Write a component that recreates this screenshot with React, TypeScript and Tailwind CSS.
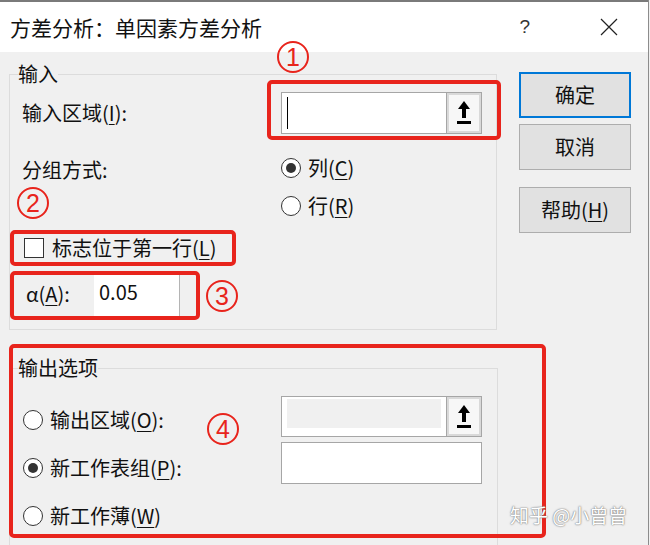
import type { ReactNode } from 'react'

const RED = 'border-[#e8241c]'

function Key({ children }: { children: ReactNode }) {
  return <span className="underline underline-offset-[3px] decoration-1">{children}</span>
}

function Radio({ checked }: { checked?: boolean }) {
  return (
    <span className="flex h-[20px] w-[20px] shrink-0 items-center justify-center rounded-full border border-[#333] bg-white">
      {checked && <span className="h-[10px] w-[10px] rounded-full bg-[#333]" />}
    </span>
  )
}

function PickButton() {
  return (
    <div className="flex h-full w-[36px] shrink-0 items-center justify-center border border-[#a6a6a6] bg-[#d9d9d9] p-[2px]">
      <div className="flex h-full w-full items-center justify-center bg-[#f7f7f7]">
        <svg width="16" height="26" viewBox="0 0 16 26">
          <path d="M8 1 L14 9 L10 9 L10 18 L6 18 L6 9 L2 9 Z" fill="#000" />
          <rect x="1" y="21" width="14" height="3" fill="#000" />
        </svg>
      </div>
    </div>
  )
}

function Circled({ n, className }: { n: string; className: string }) {
  return (
    <div
      className={`absolute flex h-[32px] w-[32px] items-center justify-center rounded-full border-[2.5px] ${RED} font-['Liberation_Sans',sans-serif] text-[25px] leading-none text-[#e8241c] ${className}`}
    >
      {n}
    </div>
  )
}

function Btn({ children, primary }: { children: ReactNode; primary?: boolean }) {
  return (
    <div
      className={`flex h-[46px] w-[112px] items-center justify-center bg-[#e1e1e1] ${
        primary ? 'border-2 border-[#0078d7]' : 'border border-[#adadad]'
      }`}
    >
      <span>{children}</span>
    </div>
  )
}

export default function App() {
  return (
    <div className="relative h-[545px] w-[650px] overflow-hidden bg-[#f0f0f0] font-['Noto_Sans_CJK_SC','Liberation_Sans',sans-serif] text-[20px] leading-[22px] text-[#111]">
      <div className="w-[649px] border-r border-[#8c8c8c]">
        {/* title bar */}
        <div className="flex h-[52px] items-center border-t-2 border-[#7a7a7a] bg-white pl-[10px]">
          <span className="text-[21px]">方差分析：单因素方差分析</span>
          <span className="ml-auto mr-[70px] font-['Liberation_Sans',sans-serif] text-[19px] font-light text-[#333]">?</span>
          <svg width="18" height="18" viewBox="0 0 18 18" className="mr-[30px]">
            <path d="M1 1 L17 17 M17 1 L1 17" stroke="#222" strokeWidth="1.2" />
          </svg>
        </div>

        <div className="flex h-[493px]">
          {/* left column */}
          <div className="w-[498px] pl-[9px] pt-[11px]">
            <fieldset className="h-[267px] w-[488px] border border-[#dcdcdc]">
              <legend className="ml-[8px] px-0 leading-[22px]">输入</legend>
              <div className="pl-[12px]">
                <div className="mt-[7px] flex h-[42px] items-center">
                  <span className="w-[259px]">
                    输入区域(<Key>I</Key>):
                  </span>
                  <div className="flex h-full w-[201px]">
                    <div className="flex flex-1 items-center border border-[#a6a6a6] border-r-0 bg-white pl-[5px]">
                      <span className="h-[32px] w-px bg-black" />
                    </div>
                    <PickButton />
                  </div>
                </div>
                <div className="mt-[15px] flex h-[38px] items-center">
                  <span className="w-[259px] pt-[4px]">分组方式:</span>
                  <span className="flex items-center gap-[7px]">
                    <Radio checked />
                    <span>
                      列(<Key>C</Key>)
                    </span>
                  </span>
                </div>
                <div className="flex h-[38px] items-center pl-[259px]">
                  <span className="flex items-center gap-[7px]">
                    <Radio />
                    <span>
                      行(<Key>R</Key>)
                    </span>
                  </span>
                </div>
                <div className="mt-[5px] flex h-[36px] items-center gap-[8px] pl-[2px]">
                  <span className="h-[20px] w-[20px] border border-[#333] bg-white" />
                  <span>
                    标志位于第一行(<Key>L</Key>)
                  </span>
                </div>
                <div className="mt-[6px] flex h-[44px] items-center">
                  <span className="w-[72px] pl-[4px]">
                    α(<Key>A</Key>):
                  </span>
                  <div className="flex h-full w-[86px] items-start border-r border-[#b4b4b4] bg-white pl-[5px] pt-[9px]">
                    0.05
                  </div>
                </div>
              </div>
            </fieldset>

            <fieldset className="mt-[27px] h-[220px] w-[489px] border border-[#dcdcdc]">
              <legend className="ml-[8px] px-0 leading-[22px]">输出选项</legend>
              <div className="mt-[17px] flex items-start pl-[12px]">
                <div className="w-[259px]">
                  <div className="flex h-[48px] items-center gap-[7px] pl-[1px]">
                    <Radio />
                    <span>
                      输出区域(<Key>O</Key>):
                    </span>
                  </div>
                  <div className="flex h-[48px] items-center gap-[7px] pl-[1px]">
                    <Radio checked />
                    <span>
                      新工作表组(<Key>P</Key>):
                    </span>
                  </div>
                  <div className="flex h-[48px] items-center gap-[7px] pl-[1px]">
                    <Radio />
                    <span>
                      新工作薄(<Key>W</Key>)
                    </span>
                  </div>
                </div>
                <div className="flex w-[201px] flex-col gap-[5px]">
                  <div className="flex h-[41px]">
                    <div className="flex flex-1 border border-r-0 border-[#a6a6a6] bg-white py-[2px] pl-[5px] pr-[5px]">
                      <div className="h-[29px] flex-1 bg-[#f0f0f0]" />
                    </div>
                    <PickButton />
                  </div>
                  <div className="h-[42px] border border-[#a6a6a6] bg-white" />
                </div>
              </div>
            </fieldset>
          </div>

          {/* buttons */}
          <div className="flex flex-col pl-[21px] pt-[20px]">
            <Btn primary>确定</Btn>
            <div className="mt-[6px]">
              <Btn>取消</Btn>
            </div>
            <div className="mt-[17px]">
              <Btn>
                帮助(<Key>H</Key>)
              </Btn>
            </div>
          </div>
        </div>
      </div>

      {/* annotations */}
      <div className={`absolute left-[267px] top-[80px] h-[60px] w-[234px] rounded-[5px] border-4 ${RED}`} />
      <div className={`absolute left-[10px] top-[230px] h-[36px] w-[226px] rounded-[5px] border-4 ${RED}`} />
      <div className={`absolute left-[10px] top-[271px] h-[49px] w-[190px] rounded-[5px] border-4 ${RED}`} />
      <div className={`absolute left-[9px] top-[344px] h-[194px] w-[537px] rounded-[5px] border-4 ${RED}`} />
      <Circled n="1" className="left-[277px] top-[41px]" />
      <Circled n="2" className="left-[17px] top-[187px]" />
      <Circled n="3" className="left-[206px] top-[280px]" />
      <Circled n="4" className="left-[207px] top-[413px]" />

      <div className="absolute left-[510px] top-[504px] text-[19px] text-white [text-shadow:0_0_2px_#7a7a7a,0_0_1px_#7a7a7a]">
        知乎 @小曾曾
      </div>
    </div>
  )
}
